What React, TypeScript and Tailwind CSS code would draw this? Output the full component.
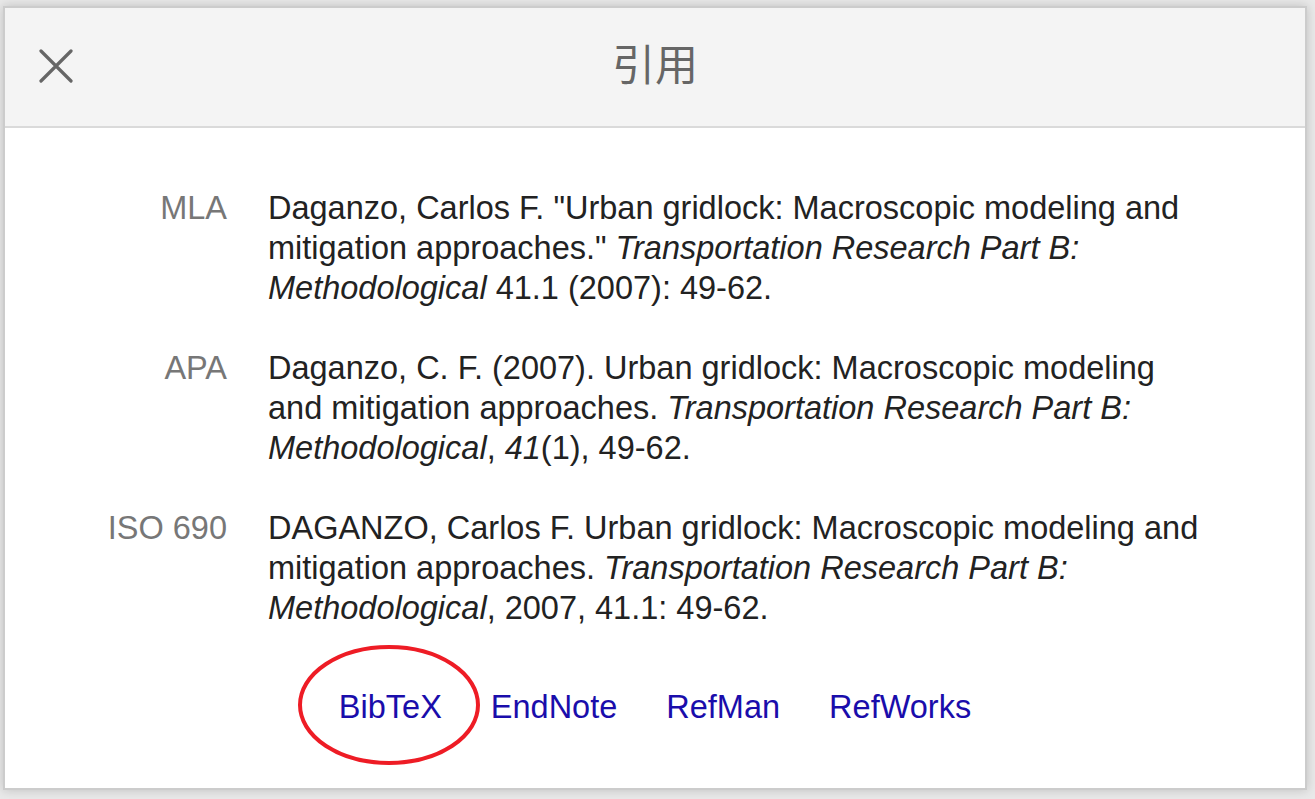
type Cite = {
  label: string;
  body: React.ReactNode;
};

const citations: Cite[] = [
  {
    label: 'MLA',
    body: (
      <>
        Daganzo, Carlos F. "Urban gridlock: Macroscopic modeling and mitigation approaches."{' '}
        <i>Transportation Research Part B: Methodological</i> 41.1 (2007): 49-62.
      </>
    ),
  },
  {
    label: 'APA',
    body: (
      <>
        Daganzo, C. F. (2007). Urban gridlock: Macroscopic modeling and mitigation approaches.{' '}
        <i>Transportation Research Part B: Methodological</i>, <i>41</i>(1), 49-62.
      </>
    ),
  },
  {
    label: 'ISO 690',
    body: (
      <>
        DAGANZO, Carlos F. Urban gridlock: Macroscopic modeling and mitigation approaches.{' '}
        <i>Transportation Research Part B: Methodological</i>, 2007, 41.1: 49-62.
      </>
    ),
  },
];

const links = ['BibTeX', 'EndNote', 'RefMan', 'RefWorks'];

function CloseIcon() {
  return (
    <svg width="34" height="34" viewBox="0 0 34 34" className="block">
      <path d="M2 2 L32 32 M32 2 L2 32" stroke="#666666" strokeWidth="3.2" strokeLinecap="round" fill="none" />
    </svg>
  );
}

export default function App() {
  return (
    <div className="h-[799px] w-full overflow-hidden bg-[#e9e9e9] font-['Liberation_Sans',Arial,sans-serif]">
      {/* Dialog */}
      <div className="ml-[3px] mt-[6px] flex h-[784px] w-[1304px] flex-col border-2 border-[#cccccc] bg-white shadow-[0_0_10px_rgba(0,0,0,0.18)]">
        {/* Header */}
        <div className="grid h-[120px] shrink-0 grid-cols-[1fr_auto_1fr] items-center border-b-2 border-[#dadada] bg-[#f4f4f4]">
          <div className="pl-[34px] pb-[2px]">
            <CloseIcon />
          </div>
          <h1 className="pb-[10px] text-[43px] leading-none text-[#666666] font-['Noto_Sans_CJK_SC','Noto_Sans_CJK_JP',sans-serif]">
            引用
          </h1>
          <div />
        </div>

        {/* Citations */}
        <div className="flex flex-col pt-[60px]">
          <div className="flex flex-col gap-[40px]">
            {citations.map((c) => (
              <div key={c.label} className="flex text-[32.5px] leading-[40px]">
                <div className="w-[222px] shrink-0 text-right text-[#777777]">{c.label}</div>
                <div className="ml-[41px] w-[938px] text-[#222222]">{c.body}</div>
              </div>
            ))}
          </div>

          {/* Export links */}
          <div className="mt-[59px] flex justify-center gap-[49px] text-[32.5px] leading-[40px] text-[#1a0dab]">
            {links.map((l, i) => (
              <span key={l} className="relative">
                {l}
                {i === 0 && (
                  <svg
                    className="pointer-events-none absolute left-[-43px] top-[-44px] h-[124px] w-[186px] overflow-visible"
                    viewBox="0 0 186 124"
                  >
                    <ellipse cx="93" cy="62" rx="89" ry="58" fill="none" stroke="#ee1c25" strokeWidth="4" />
                  </svg>
                )}
              </span>
            ))}
          </div>
        </div>
      </div>
    </div>
  );
}
